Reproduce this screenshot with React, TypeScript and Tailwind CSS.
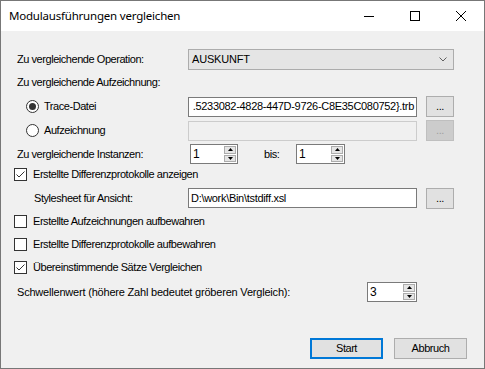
import React from "react";

const sans = "font-['Liberation_Sans',Arial,sans-serif]";

function CheckBox({ checked }: { checked?: boolean }) {
  return (
    <div className="w-[13px] h-[13px] bg-white border border-[#333333] flex items-center justify-center shrink-0">
      {checked && (
        <svg width="11" height="11" viewBox="0 0 11 11">
          <path d="M1.5 5.5 L4 8 L9.5 2.5" fill="none" stroke="#333333" strokeWidth="1" />
        </svg>
      )}
    </div>
  );
}

function Radio({ checked }: { checked?: boolean }) {
  return (
    <div className="w-[13px] h-[13px] rounded-full bg-white border border-[#333333] flex items-center justify-center shrink-0">
      {checked && <div className="w-[7px] h-[7px] rounded-full bg-[#333333]" />}
    </div>
  );
}

function Spinner({ value, width }: { value: string; width: string }) {
  return (
    <div className={`${width} h-[20px] bg-white border border-[#7a7a7a] flex items-stretch`}>
      <div className="flex-1 pl-[2px] pt-[2px] text-[12px] leading-[14px] text-black">{value}</div>
      <div className="w-[13px] flex flex-col py-[1px] pr-[1px] gap-[1px]">
        <div className="flex-1 bg-[#e5e5e5] border border-[#acacac] flex items-center justify-center">
          <svg width="5" height="3" viewBox="0 0 5 3">
            <path d="M0 3 L2.5 0 L5 3 Z" fill="#000" />
          </svg>
        </div>
        <div className="flex-1 bg-[#e5e5e5] border border-[#acacac] flex items-center justify-center">
          <svg width="5" height="3" viewBox="0 0 5 3">
            <path d="M0 0 L2.5 3 L5 0 Z" fill="#000" />
          </svg>
        </div>
      </div>
    </div>
  );
}

function DotsButton({ disabled }: { disabled?: boolean }) {
  return (
    <div
      className={`w-[28px] h-[21px] border flex items-center justify-center text-[11px] ${
        disabled ? "bg-[#cccccc] border-[#bfbfbf] text-[#a0a0a0]" : "bg-[#e1e1e1] border-[#adadad] text-black"
      }`}
    >
      ...
    </div>
  );
}

const tracePath = ".5233082-4828-447D-9726-C8E35C080752}.trb";

export default function App() {
  return (
    <div
      className={`w-[485px] h-[369px] border border-[#777777] bg-[#f0f0f0] flex flex-col text-[11px] tracking-[-0.45px] text-black ${sans}`}
    >
      {/* Title bar */}
      <div className="h-[30px] bg-white flex items-center shrink-0">
        <div className="pl-[8px] flex-1 text-[11.5px] tracking-[-0.2px] font-['Noto_Sans',sans-serif] text-black">
          Modulausführungen vergleichen
        </div>
        <div className="w-[46px] h-[30px] flex items-center justify-center">
          <svg width="10" height="10" viewBox="0 0 10 10">
            <path d="M0 5.5 H10" stroke="#000" strokeWidth="1" />
          </svg>
        </div>
        <div className="w-[46px] h-[30px] flex items-center justify-center">
          <svg width="10" height="10" viewBox="0 0 10 10">
            <rect x="0.5" y="0.5" width="9" height="9" fill="none" stroke="#000" strokeWidth="1" />
          </svg>
        </div>
        <div className="w-[46px] h-[30px] flex items-center justify-center">
          <svg width="10" height="10" viewBox="0 0 10 10">
            <path d="M0 0 L10 10 M10 0 L0 10" stroke="#000" strokeWidth="1" />
          </svg>
        </div>
      </div>

      {/* Body */}
      <div className="flex-1 flex flex-col pl-[15px] pr-[30px]">
        {/* Operation */}
        <div className="mt-[17px] h-[22px] flex items-center">
          <div className="w-[172px] pl-[1px]">Zu vergleichende Operation:</div>
          <div className="flex-1 h-[21px] bg-[#e5e5e5] border border-[#acacac] flex items-center justify-between pl-[3px] pr-[6px] tracking-[-0.2px]">
            <span>AUSKUNFT</span>
            <svg width="8" height="5" viewBox="0 0 8 5">
              <path d="M0.5 0.5 L4 4 L7.5 0.5" fill="none" stroke="#606060" strokeWidth="1" />
            </svg>
          </div>
        </div>

        {/* Aufzeichnung label */}
        <div className="mt-[2px] h-[20px] flex items-center pl-[1px]">Zu vergleichende Aufzeichnung:</div>

        {/* Trace-Datei */}
        <div className="mt-[4px] h-[21px] flex items-center">
          <div className="w-[172px] flex items-center pl-[10px] gap-[5px]">
            <Radio checked />
            <span>Trace-Datei</span>
          </div>
          <div className="flex-1 h-[20px] bg-white border border-[#7a7a7a] flex items-center justify-end whitespace-nowrap pr-[2px] tracking-[-0.3px]">
            {tracePath}
          </div>
          <div className="ml-[9px]">
            <DotsButton />
          </div>
        </div>

        {/* Aufzeichnung */}
        <div className="mt-[3px] h-[21px] flex items-center">
          <div className="w-[172px] flex items-center pl-[10px] gap-[5px]">
            <Radio />
            <span>Aufzeichnung</span>
          </div>
          <div className="flex-1 h-[20px] bg-[#f0f0f0] border border-[#cccccc]" />
          <div className="ml-[9px]">
            <DotsButton disabled />
          </div>
        </div>

        {/* Instanzen */}
        <div className="mt-[3px] h-[20px] flex items-center">
          <div className="w-[174px] pl-[1px]">Zu vergleichende Instanzen:</div>
          <Spinner value="1" width="w-[48px]" />
          <div className="w-[58px] pl-[26px]">bis:</div>
          <Spinner value="1" width="w-[49px]" />
        </div>

        {/* Checkbox anzeigen */}
        <div className="mt-[2px] h-[16px] flex items-center gap-[6px] -ml-[2px]">
          <CheckBox checked />
          <span>Erstellte Differenzprotokolle anzeigen</span>
        </div>

        {/* Stylesheet */}
        <div className="mt-[5px] h-[22px] flex items-center">
          <div className="w-[172px] pl-[18px]">Stylesheet für Ansicht:</div>
          <div className="flex-1 h-[20px] bg-white border border-[#7a7a7a] flex items-center pl-[2px] tracking-[-0.3px]">
            D:\work\Bin\tstdiff.xsl
          </div>
          <div className="ml-[9px]">
            <DotsButton />
          </div>
        </div>

        {/* Checkboxes */}
        <div className="mt-[1px] h-[23px] flex items-center gap-[6px] -ml-[2px]">
          <CheckBox />
          <span>Erstellte Aufzeichnungen aufbewahren</span>
        </div>
        <div className="h-[23px] flex items-center gap-[6px] -ml-[2px]">
          <CheckBox />
          <span>Erstellte Differenzprotokolle aufbewahren</span>
        </div>
        <div className="h-[23px] flex items-center gap-[6px] -ml-[2px]">
          <CheckBox checked />
          <span>Übereinstimmende Sätze Vergleichen</span>
        </div>

        {/* Schwellenwert */}
        <div className="mt-[2px] h-[22px] flex items-center">
          <div className="w-[351px] pl-[1px] tracking-[-0.2px]">
            Schwellenwert (höhere Zahl bedeutet gröberen Vergleich):
          </div>
          <Spinner value="3" width="w-[50px]" />
        </div>

        {/* Buttons */}
        <div className="mt-[35px] flex justify-end gap-[11px] mr-[-13px]">
          <div className="w-[73px] h-[21px] bg-[#e1e1e1] border-2 border-[#0078d7] flex items-center justify-center">
            Start
          </div>
          <div className="w-[73px] h-[21px] bg-[#e1e1e1] border border-[#adadad] flex items-center justify-center">
            Abbruch
          </div>
        </div>
      </div>
    </div>
  );
}
